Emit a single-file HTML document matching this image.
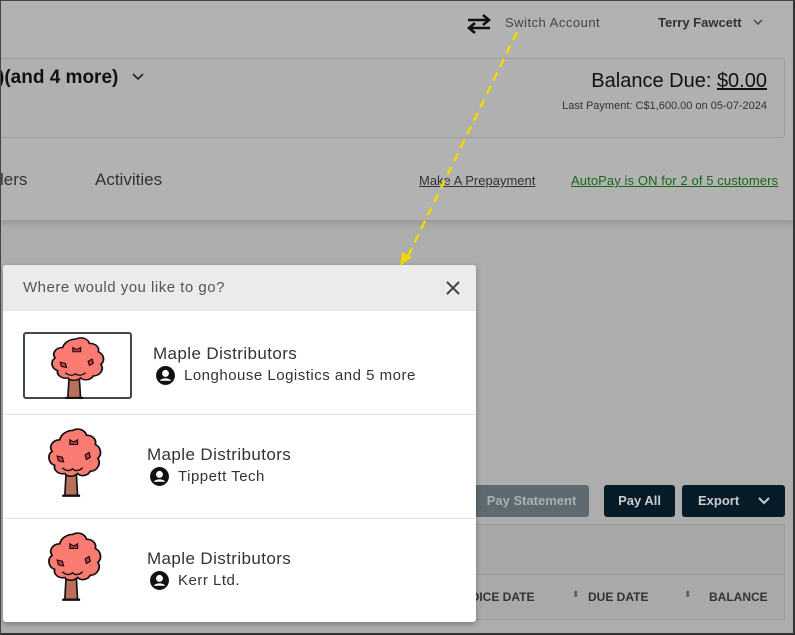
<!DOCTYPE html>
<html><head><style>
*{margin:0;padding:0;box-sizing:border-box}
body{width:795px;height:635px;overflow:hidden;background:#adadad;font-family:"Liberation Sans",sans-serif;position:relative}
.frame{position:absolute;inset:0;border:1px solid #444;border-right:2px solid #333;border-bottom:2px solid #333;pointer-events:none;z-index:20}
.top{position:absolute;left:0;top:0;width:795px;height:220px;background:#b2b2b2;box-shadow:0 4px 6px rgba(0,0,0,.12)}
.abs{position:absolute;white-space:nowrap}
.card{position:absolute;left:-5px;top:58px;width:790px;height:80px;border:1px solid #9c9c9c;border-radius:3px;background:#b0b0b0}
.btn{position:absolute;top:485px;height:32px;border-radius:3px;color:#ccc;font-weight:bold;font-size:13px;line-height:32px;text-align:center}
.modal{position:absolute;left:3px;top:265px;width:473px;height:357px;background:#fff;border-radius:3px;box-shadow:0 2px 6px rgba(0,0,0,.3);overflow:hidden;z-index:10}
.mh{height:45px;background:#ebebeb;position:relative}
.row{height:104px;border-top:1px solid #e3e3e3;position:relative}
.row:first-of-type{border-top:none}
.t1{position:absolute;font-size:17px;letter-spacing:0.4px;color:#333}
.t2{position:absolute;font-size:15px;letter-spacing:0.5px;color:#333;display:flex;align-items:center;gap:8px}
</style></head><body>
<div class="top">
 <svg class="abs" style="left:465px;top:13px" width="28" height="22" viewBox="0 0 28 22"><path d="M3 7h20M18 2l6 5-6 5" stroke="#111" stroke-width="2.6" fill="none"/><path d="M25 15H5M10 10l-6 5 6 5" stroke="#111" stroke-width="2.6" fill="none"/></svg>
 <div class="abs" style="left:505px;top:15px;font-size:13px;letter-spacing:0.5px;color:#444">Switch Account</div>
 <div class="abs" style="left:658px;top:15px;font-size:13px;color:#333;font-weight:bold">Terry Fawcett</div>
 <svg class="abs" style="left:753px;top:18px" width="10" height="8"><path d="M1 2l4 4 4-4" stroke="#444" stroke-width="1.4" fill="none"/></svg>
 <div class="card"></div>
 <div class="abs" style="left:-2px;top:67px;font-size:19px;font-weight:bold;color:#111">)(and 4 more)</div>
 <svg class="abs" style="left:132px;top:72px" width="12" height="9"><path d="M1 2l5 5 5-5" stroke="#222" stroke-width="1.6" fill="none"/></svg>
 <div class="abs" style="right:28px;top:70px;font-size:20px;color:#111">Balance Due: <span style="text-decoration:underline">$0.00</span></div>
 <div class="abs" style="right:28px;top:100px;font-size:11px;color:#333">Last Payment: C$1,600.00 on 05-07-2024</div>
 <div class="abs" style="left:0;top:170px;font-size:17px;color:#333">lers</div>
 <div class="abs" style="left:95px;top:170px;font-size:17px;color:#333">Activities</div>
 <div class="abs" style="left:419px;top:173px;font-size:13px;color:#333;text-decoration:underline">Make A Prepayment</div>
 <div class="abs" style="left:571px;top:173px;font-size:13px;letter-spacing:0.1px;color:#186818;text-decoration:underline">AutoPay is ON for 2 of 5 customers</div>
</div>
<svg class="abs" style="left:395px;top:30px;z-index:11" width="130" height="240"><path d="M122 2L12 228" stroke="#f2d600" stroke-width="2.5" stroke-dasharray="9 6" fill="none"/><path d="M5 236l2-14 10 5z" fill="#f2d600"/></svg>
<div class="btn" style="left:474px;width:115px;background:#5f6a70;color:#a9b0b4">Pay Statement</div>
<div class="btn" style="left:604px;width:71px;background:#061a28;color:#ccc">Pay All</div>
<div class="btn" style="left:682px;width:103px;background:#061a28;color:#ccc;text-align:left;padding-left:16px">Export<svg style="position:absolute;left:76px;top:12px" width="12" height="8"><path d="M1 1l5 5 5-5" stroke="#ccc" stroke-width="2" fill="none"/></svg></div>
<div class="abs" style="left:470px;top:524px;width:315px;height:50px;background:#a7a7a7;border:1px solid #9a9a9a;border-bottom:none"></div>
<div class="abs" style="left:470px;top:574px;width:315px;height:46px;background:#a9a9a9;border:1px solid #9a9a9a"></div>
<div class="abs" style="left:470px;top:590px;font-size:12px;font-weight:bold;color:#333">OICE DATE</div>
<div class="abs" style="left:572px;top:589px;font-size:9px;color:#555">⬍</div>
<div class="abs" style="left:588px;top:590px;font-size:12px;font-weight:bold;color:#333">DUE DATE</div>
<div class="abs" style="left:684px;top:589px;font-size:9px;color:#555">⬍</div>
<div class="abs" style="left:709px;top:590px;font-size:12px;font-weight:bold;color:#333">BALANCE</div>
<div class="modal">
 <div class="mh"><div class="abs" style="left:20px;top:14px;font-size:15px;letter-spacing:0.5px;color:#555">Where would you like to go?</div>
 <svg class="abs" style="left:442px;top:15px" width="16" height="16"><path d="M2 2l12 12M14 2L2 14" stroke="#444" stroke-width="2"/></svg></div>
 <div class="row"><div class="abs" style="left:20px;top:21px;width:109px;height:67px;border:2px solid #3d474d;border-radius:3px"></div>
  <svg class="abs" style="left:47px;top:70px" width="0" height="0"></svg>
  <svg class="abs" style="left:47px;top:25px" width="56" height="64" viewBox="10 1 44 61" preserveAspectRatio="none"><use href="#tree"/></svg>
  <div class="t1" style="left:150px;top:33px">Maple Distributors</div>
  <div class="t2" style="left:152px;top:54px"><svg width="21" height="21" viewBox="0 0 20 20"><use href="#usr"/></svg>Longhouse Logistics and 5 more</div></div>
 <div class="row"><svg class="abs" style="left:44px;top:12px" width="56" height="71" viewBox="10 1 44 61" preserveAspectRatio="none"><use href="#tree"/></svg>
  <div class="t1" style="left:144px;top:30px">Maple Distributors</div>
  <div class="t2" style="left:146px;top:51px"><svg width="21" height="21" viewBox="0 0 20 20"><use href="#usr"/></svg>Tippett Tech</div></div>
 <div class="row"><svg class="abs" style="left:44px;top:12px" width="56" height="71" viewBox="10 1 44 61" preserveAspectRatio="none"><use href="#tree"/></svg>
  <div class="t1" style="left:144px;top:30px">Maple Distributors</div>
  <div class="t2" style="left:146px;top:51px"><svg width="21" height="21" viewBox="0 0 20 20"><use href="#usr"/></svg>Kerr Ltd.</div></div>
</div>
<svg width="0" height="0" style="position:absolute"><defs>
 <g id="tree"><path d="M25 40h8l1 20h-10z" fill="#b8705a" stroke="#111" stroke-width="1.3"/><path d="M22 60h14" stroke="#111" stroke-width="2"/>
 <path d="M30 4c5-3 10 0 11 4 5 0 8 4 7 8 5 3 5 9 2 12 3 5-1 11-6 11-2 4-7 5-10 2-3 3-8 3-10 0-5 1-9-3-8-7-5-2-6-9-2-12-3-5 1-10 6-10 1-5 6-8 10-8z" fill="#f97b72" stroke="#111" stroke-width="1.4"/>
 <path d="M28 12l3 2 3-2v4h-6z M18 26l4 1 1 4-4-1z M40 25l3-2 1 4-3 2z" fill="#e8323a" stroke="#111" stroke-width="1"/>
 <path d="M22 36c3 3 6 3 8 1 2 2 5 2 8-1" stroke="#111" stroke-width="1.2" fill="none"/></g>
 <g id="usr"><circle cx="10" cy="10" r="9" fill="#111"/><circle cx="10" cy="8" r="3.3" fill="#fff"/><path d="M4.5 15c2-3 9-3 11 0z" fill="#fff"/></g>
</defs></svg>
<div class="frame"></div>
</body></html>
